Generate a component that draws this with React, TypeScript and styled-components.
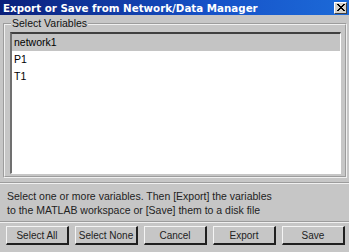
import React from "react";
import styled, { createGlobalStyle } from "styled-components";

const Global = createGlobalStyle`
  html, body { margin: 0; padding: 0; }
  body { width: 349px; height: 252px; overflow: hidden; background: #c6c6c6; font-family: "Liberation Sans", Arial, sans-serif; }
`;

const Window = styled.div`
  width: 349px;
  height: 252px;
  background: #c6c6c6;
  display: flex;
  flex-direction: column;
  box-sizing: border-box;
`;

const TitleBar = styled.div`
  height: 15px;
  background: linear-gradient(to right, #0a1f7a, #1652c8 60%, #1c6ad8);
  display: flex;
  align-items: center;
  justify-content: space-between;
  padding: 0 2px 0 3px;
  color: #fff;
  font-family: "DejaVu Sans", Verdana, sans-serif;
  font-weight: bold;
  font-size: 10.3px;
  flex-shrink: 0;
`;

const CloseBtn = styled.div`
  width: 13px;
  height: 12px;
  background: #d4d0c8;
  border-top: 1px solid #fff;
  border-left: 1px solid #fff;
  border-right: 1px solid #404040;
  border-bottom: 1px solid #404040;
  box-sizing: border-box;
  display: flex;
  align-items: center;
  justify-content: center;
`;

const Group = styled.fieldset`
  margin: 2px 2px 0 3px;
  padding: 2px 4px 3px 5px;
  border: 2px groove #f0f0f0;
  height: 161px;
  box-sizing: border-box;
  min-width: 0;
`;

const Legend = styled.legend`
  font-size: 10.5px;
  color: #111;
  padding: 0 1px;
  margin-left: 1px;
  line-height: 13px;
`;

const List = styled.div`
  height: 142px;
  box-sizing: border-box;
  background: #fff;
  border-top: 2px solid #404040;
  border-left: 2px solid #707070;
  border-right: 1px solid #fff;
  border-bottom: 1px solid #fff;
  display: flex;
  flex-direction: column;
`;

const Row = styled.div<{ $selected?: boolean }>`
  height: 17px;
  line-height: 17px;
  padding-left: 2px;
  font-size: 10.5px;
  color: #000;
  background: ${(p) => (p.$selected ? "#c4c4c4" : "transparent")};
`;

const Info = styled.div`
  margin: 4px 0 0 0;
  height: 41px;
  border-top: 2px groove #f0f0f0;
  border-bottom: 2px groove #f0f0f0;
  box-sizing: border-box;
  padding: 5px 0 0 7px;
  font-size: 10.5px;
  line-height: 14px;
  color: #222;
`;

const ButtonBar = styled.div`
  display: flex;
  justify-content: space-between;
  padding: 3px 4px 0 6px;
`;

const Button = styled.button`
  width: 63px;
  height: 19px;
  background: #c6c6c6;
  border-top: 1px solid #f4f4f4;
  border-left: 1px solid #f4f4f4;
  border-right: 2px solid #202020;
  border-bottom: 2px solid #202020;
  font-family: "Liberation Sans", Arial, sans-serif;
  font-size: 10px;
  color: #222;
  padding: 0;
  box-sizing: border-box;
  white-space: nowrap;
`;

export default function App() {
  return (
    <>
      <Global />
      <Window>
        <TitleBar>
          <span>Export or Save from Network/Data Manager</span>
          <CloseBtn>
            <svg width="9" height="8" viewBox="0 0 9 8">
              <path d="M1 0 L8 7 M2 0 L9 7 M8 0 L1 7 M9 0 L2 7" stroke="#000" strokeWidth="1" />
            </svg>
          </CloseBtn>
        </TitleBar>
        <Group>
          <Legend>Select Variables</Legend>
          <List>
            <Row $selected>network1</Row>
            <Row>P1</Row>
            <Row>T1</Row>
          </List>
        </Group>
        <Info>
          Select one or more variables. Then [Export] the variables
          <br />
          to the MATLAB workspace or [Save] them to a disk file
        </Info>
        <ButtonBar>
          <Button>Select All</Button>
          <Button>Select None</Button>
          <Button>Cancel</Button>
          <Button>Export</Button>
          <Button>Save</Button>
        </ButtonBar>
      </Window>
    </>
  );
}
